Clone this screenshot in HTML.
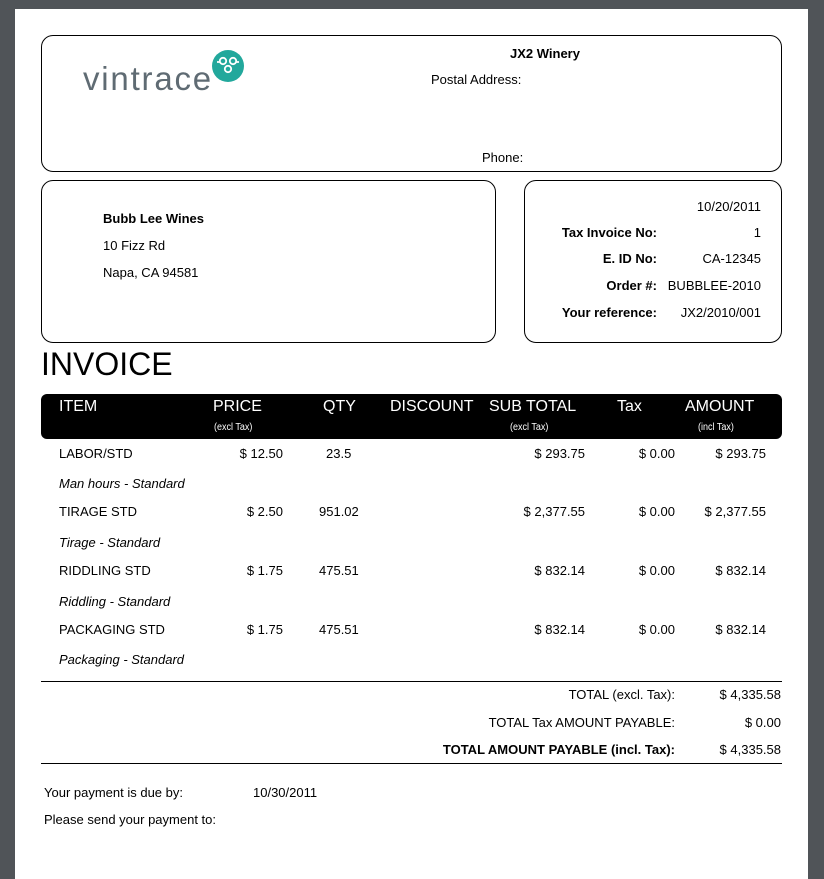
<!DOCTYPE html>
<html><head><meta charset="utf-8"><style>
body{margin:0;background:#505458;width:824px;height:867px;overflow:hidden;font-family:"Liberation Sans",Arial,sans-serif;font-size:13px;color:#000}
#pg{position:absolute;left:15px;top:9px;width:793px;height:870px;background:#fff}
.b{position:absolute;border:1px solid #000;border-radius:12px;box-sizing:border-box}
.t{position:absolute;white-space:nowrap;line-height:16px}
.r{text-align:right}
.w{color:#fff}
.bd{font-weight:bold}
.i{font-style:italic}
.s{font-size:10px;line-height:11px;transform:scaleX(0.9);transform-origin:left}
</style></head><body>
<div id="pg"></div>
<div class="b" style="left:41px;top:35px;width:741px;height:137px"></div>
<div class="b" style="left:41px;top:180px;width:455px;height:163px"></div>
<div class="b" style="left:524px;top:180px;width:258px;height:163px"></div>

<div class="t" style="left:83px;top:59px;font-size:33px;line-height:40px;color:#5f6b73;letter-spacing:1.8px">vintrace</div>
<svg style="position:absolute;left:211px;top:49px" width="34" height="34" viewBox="0 0 34 34"><circle cx="17" cy="17" r="16" fill="#22a89c"/><g fill="none" stroke="#fff" stroke-width="1.8"><circle cx="12" cy="12" r="3.2"/><circle cx="22" cy="12" r="3.2"/><circle cx="17" cy="20" r="3.2"/><path d="M6 13h2.8M25.2 13H28"/></g></svg>

<div class="t bd" style="left:510px;top:46px">JX2 Winery</div>
<div class="t" style="left:431px;top:72px">Postal Address:</div>
<div class="t" style="left:482px;top:150px">Phone:</div>

<div class="t bd" style="left:103px;top:211px">Bubb Lee Wines</div>
<div class="t" style="left:103px;top:238px">10 Fizz Rd</div>
<div class="t" style="left:103px;top:265px">Napa, CA 94581</div>

<div class="t r" style="right:63px;top:199px">10/20/2011</div>
<div class="t bd r" style="right:167px;top:225px">Tax Invoice No:</div><div class="t r" style="right:63px;top:225px">1</div>
<div class="t bd r" style="right:167px;top:251px">E. ID No:</div><div class="t r" style="right:63px;top:251px">CA-12345</div>
<div class="t bd r" style="right:167px;top:278px">Order #:</div><div class="t r" style="right:63px;top:278px">BUBBLEE-2010</div>
<div class="t bd r" style="right:167px;top:305px">Your reference:</div><div class="t r" style="right:63px;top:305px">JX2/2010/001</div>

<div class="t" style="left:41px;top:345px;font-size:32px;line-height:38px">INVOICE</div>

<div style="position:absolute;left:41px;top:394px;width:741px;height:45px;background:#000;border-radius:6px"></div>
<div class="t w" style="left:59px;top:399px;font-size:16px">ITEM</div>
<div class="t w" style="left:213px;top:399px;font-size:16px">PRICE</div>
<div class="t w s" style="left:214px;top:422px">(excl Tax)</div>
<div class="t w" style="left:323px;top:399px;font-size:16px">QTY</div>
<div class="t w" style="left:390px;top:399px;font-size:16px">DISCOUNT</div>
<div class="t w" style="left:489px;top:399px;font-size:16px">SUB TOTAL</div>
<div class="t w s" style="left:510px;top:422px">(excl Tax)</div>
<div class="t w" style="left:617px;top:399px;font-size:16px">Tax</div>
<div class="t w" style="left:685px;top:399px;font-size:16px">AMOUNT</div>
<div class="t w s" style="left:698px;top:422px">(incl Tax)</div>

<div class="t" style="left:59px;top:446px">LABOR/STD</div><div class="t r" style="right:541px;top:446px">$ 12.50</div><div class="t" style="left:326px;top:446px">23.5</div><div class="t r" style="right:239px;top:446px">$ 293.75</div><div class="t r" style="right:149px;top:446px">$ 0.00</div><div class="t r" style="right:58px;top:446px">$ 293.75</div>
<div class="t i" style="left:59px;top:476px">Man hours - Standard</div>
<div class="t" style="left:59px;top:504px">TIRAGE STD</div><div class="t r" style="right:541px;top:504px">$ 2.50</div><div class="t" style="left:319px;top:504px">951.02</div><div class="t r" style="right:239px;top:504px">$ 2,377.55</div><div class="t r" style="right:149px;top:504px">$ 0.00</div><div class="t r" style="right:58px;top:504px">$ 2,377.55</div>
<div class="t i" style="left:59px;top:535px">Tirage - Standard</div>
<div class="t" style="left:59px;top:563px">RIDDLING STD</div><div class="t r" style="right:541px;top:563px">$ 1.75</div><div class="t" style="left:319px;top:563px">475.51</div><div class="t r" style="right:239px;top:563px">$ 832.14</div><div class="t r" style="right:149px;top:563px">$ 0.00</div><div class="t r" style="right:58px;top:563px">$ 832.14</div>
<div class="t i" style="left:59px;top:594px">Riddling - Standard</div>
<div class="t" style="left:59px;top:622px">PACKAGING STD</div><div class="t r" style="right:541px;top:622px">$ 1.75</div><div class="t" style="left:319px;top:622px">475.51</div><div class="t r" style="right:239px;top:622px">$ 832.14</div><div class="t r" style="right:149px;top:622px">$ 0.00</div><div class="t r" style="right:58px;top:622px">$ 832.14</div>
<div class="t i" style="left:59px;top:652px">Packaging - Standard</div>

<div style="position:absolute;left:41px;top:681px;width:741px;height:1px;background:#000"></div>
<div class="t r" style="right:149px;top:687px">TOTAL (excl. Tax):</div><div class="t r" style="right:43px;top:687px">$ 4,335.58</div>
<div class="t r" style="right:149px;top:715px">TOTAL Tax AMOUNT PAYABLE:</div><div class="t r" style="right:43px;top:715px">$ 0.00</div>
<div class="t bd r" style="right:149px;top:742px">TOTAL AMOUNT PAYABLE (incl. Tax):</div><div class="t r" style="right:43px;top:742px">$ 4,335.58</div>
<div style="position:absolute;left:41px;top:763px;width:741px;height:1px;background:#000"></div>

<div class="t" style="left:44px;top:785px">Your payment is due by:</div><div class="t" style="left:253px;top:785px">10/30/2011</div>
<div class="t" style="left:44px;top:812px">Please send your payment to:</div>
</body></html>
